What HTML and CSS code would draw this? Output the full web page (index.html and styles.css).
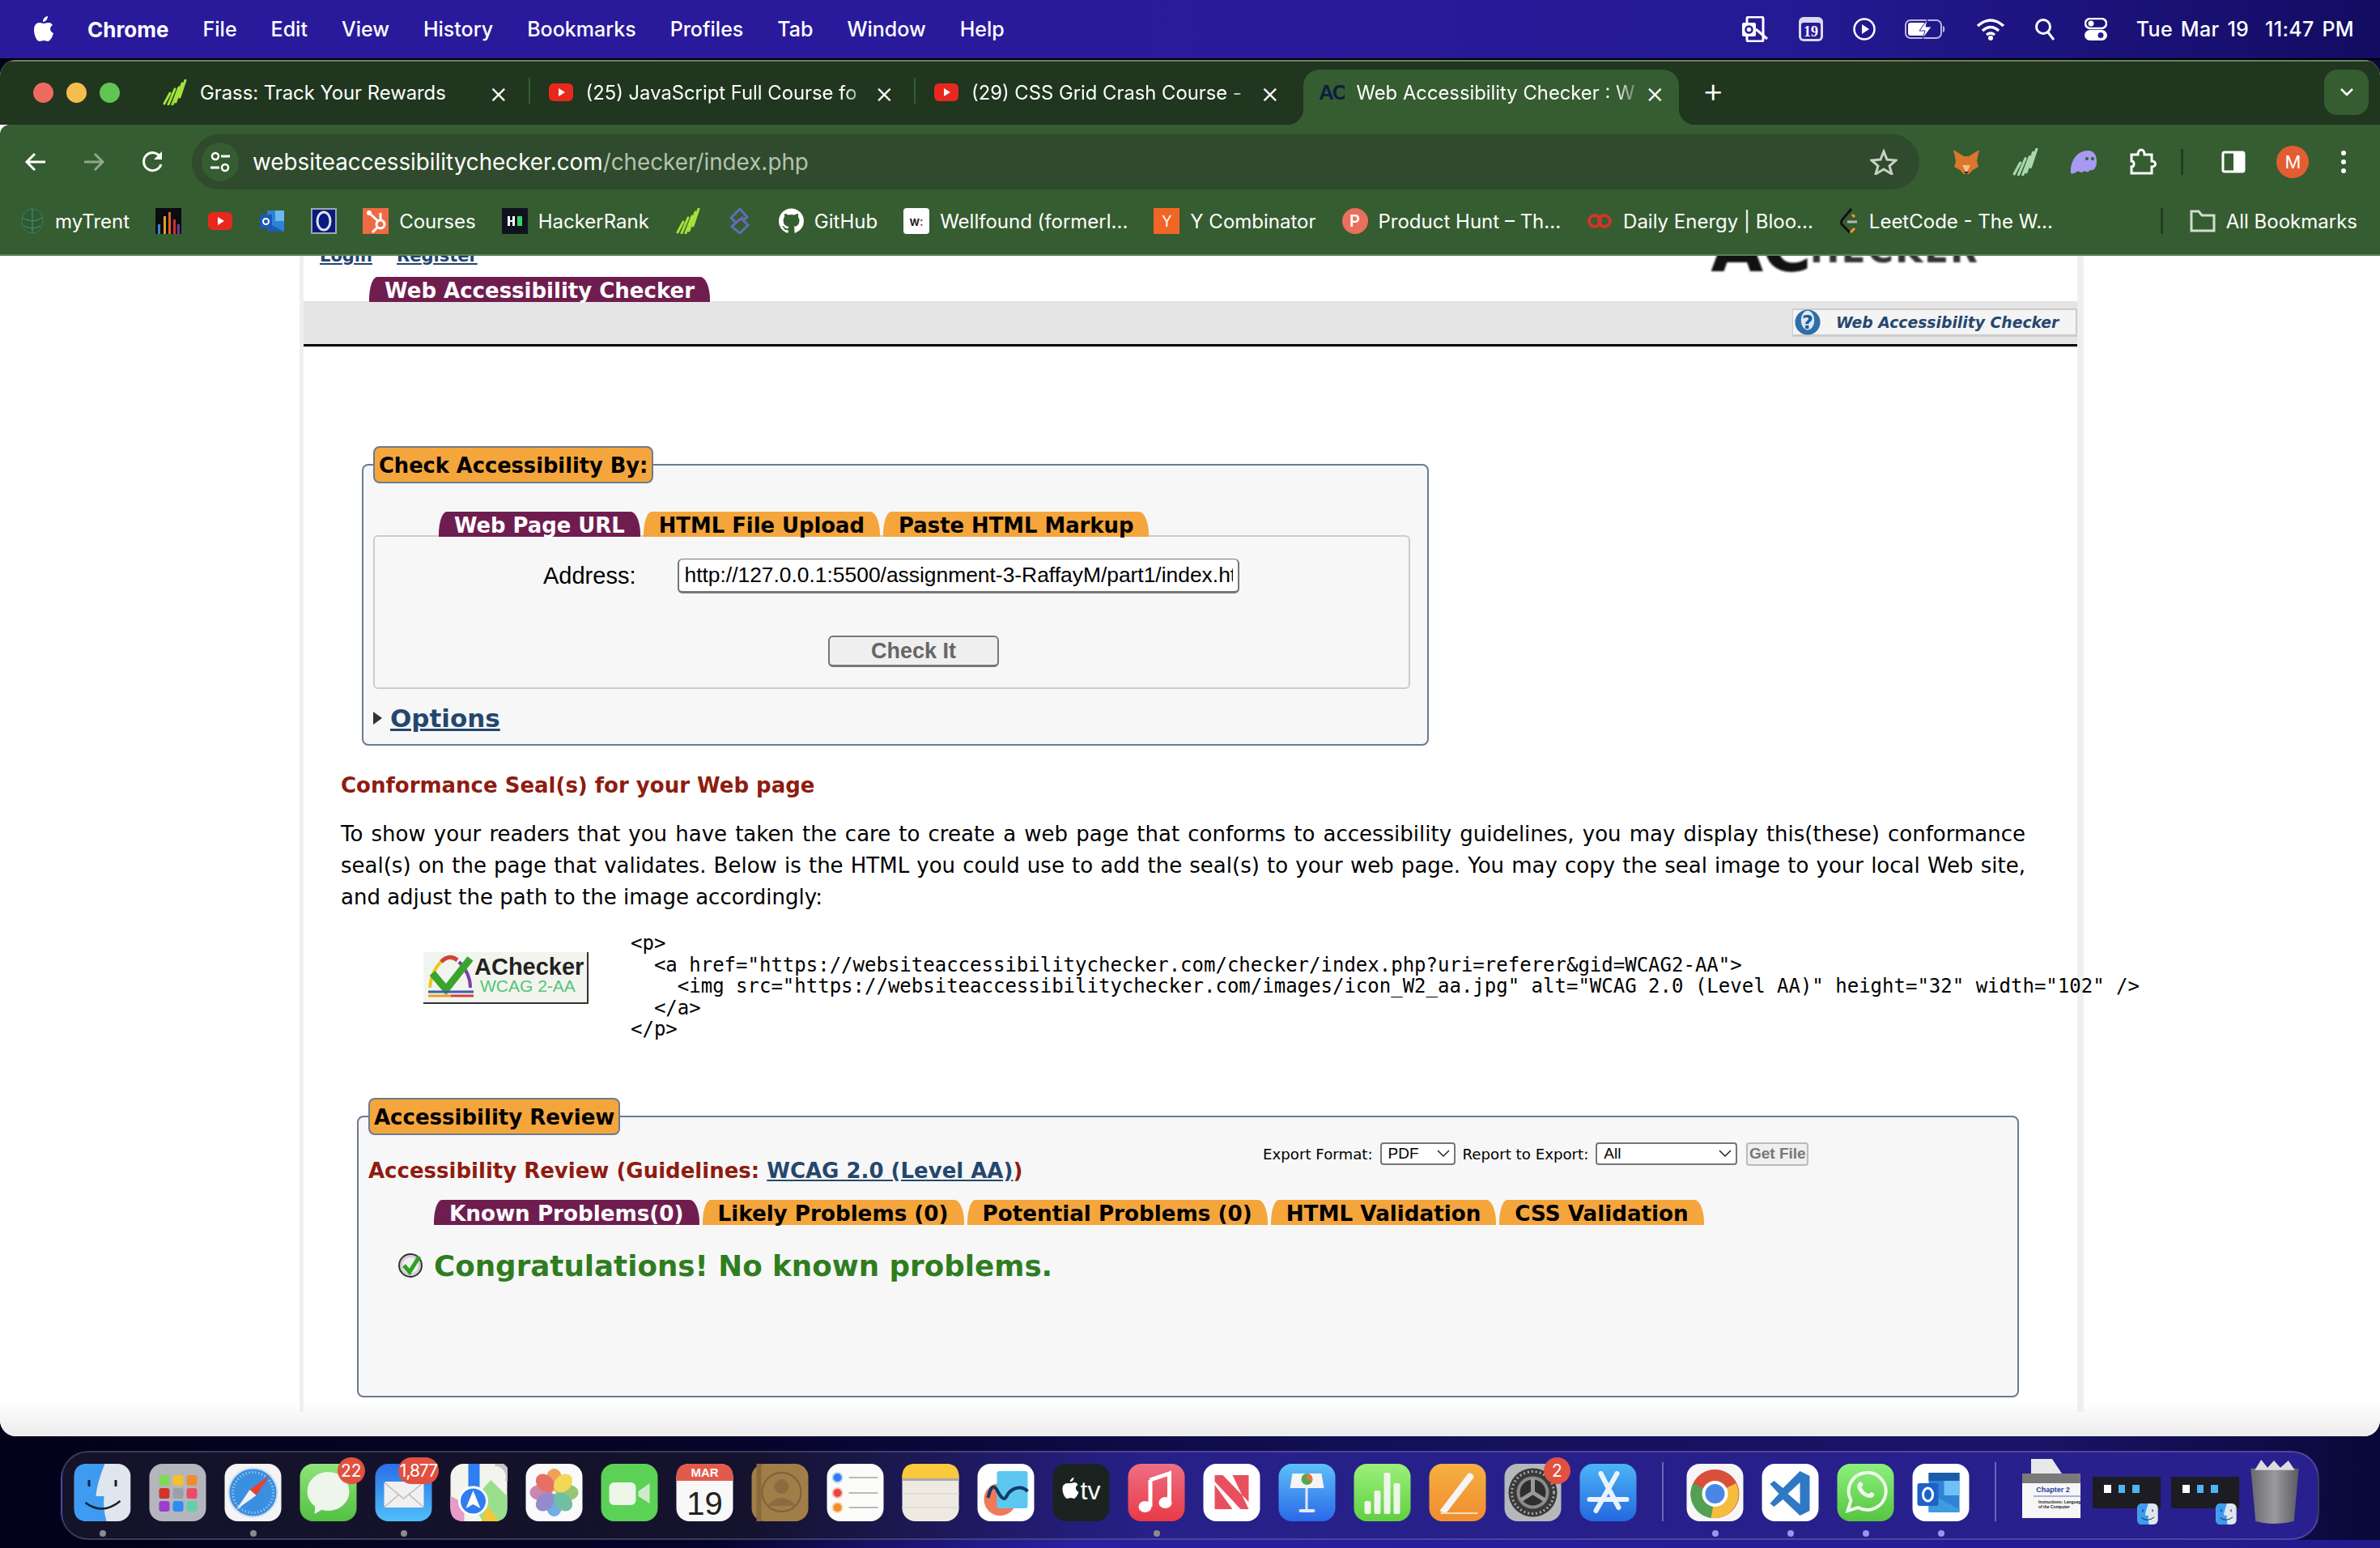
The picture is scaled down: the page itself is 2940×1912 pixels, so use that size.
FILE: index.html
```html
<!DOCTYPE html>
<html>
<head>
    <title>Web Accessibility Checker</title>
    <link rel="stylesheet" href="styles.css">
</head>
<body>
    <svg class="defs" width="0" height="0">
        <defs>
            <symbol id="yt" viewBox="0 0 32 32"><rect x="1" y="5" width="30" height="22" rx="6" fill="#e8281e"/><path d="M13 11l8 5-8 5z" fill="#fff"/></symbol>
            <symbol id="grass" viewBox="0 0 32 32"><path d="M3 30L10 17M8 31L16 12M13 31L21 10M17 28L25 5M22 22L29 1" stroke="#a4e23a" stroke-width="3" fill="none" stroke-linecap="round"/></symbol>
            <symbol id="finder" viewBox="0 0 70 71"><rect width="70" height="71" rx="16" fill="#dfe6ee"/><path d="M16 0H38C30 20 28 30 27 40H37C36 50 37 60 40 71H16Q0 71 0 55V16Q0 0 16 0Z" fill="#3d9bf2"/><rect x="17" y="20" width="3" height="8" fill="#123"/><rect x="50" y="20" width="3" height="8" fill="#123"/><path d="M14 48Q35 64 57 46" stroke="#123" stroke-width="2.5" fill="none"/></symbol>
        </defs>
    </svg>

    <div class="menubar">
        <svg class="apple" viewBox="0 0 24 32"><path d="M17 0c0 4-3 7-6 7 0-4 3-7 6-7zM12 9c2 0 3-1 6-1 2 0 4 1 5 3-4 2-4 8 1 10-1 4-4 10-7 10-2 0-3-1-5-1s-3 1-5 1C3 31 0 23 0 17 0 11 3 8 7 8c2 0 3 1 5 1z" fill="#fff"/></svg>
        <b>Chrome</b><span>File</span><span>Edit</span><span>View</span><span>History</span><span>Bookmarks</span><span>Profiles</span><span>Tab</span><span>Window</span><span>Help</span>
        <div class="status">
            <svg width="34" height="32" viewBox="0 0 34 32"><rect x="7" y="1" width="20" height="30" rx="2" fill="none" stroke="#fff" stroke-width="3"/><rect x="1" y="8" width="17" height="17" rx="2" fill="#fff"/><circle cx="9.500" cy="16.500" r="4" fill="none" stroke="#2a1a96" stroke-width="2.500"/><path d="M18 16l14 12" stroke="#fff" stroke-width="3"/></svg>
            <svg width="32" height="32" viewBox="0 0 32 32"><rect x="1" y="1" width="30" height="30" rx="6" fill="#d9d8ee"/><rect x="4" y="8" width="24" height="20" rx="3" fill="#2a1a96"/><text x="16" y="25" class="cal-num">19</text></svg>
            <svg width="28" height="30" viewBox="0 0 28 30"><circle cx="14" cy="15" r="12.500" fill="none" stroke="#fff" stroke-width="2.500"/><path d="M11 9l9 6-9 6z" fill="#fff"/></svg>
            <svg width="52" height="26" viewBox="0 0 52 26"><rect x="1" y="2" width="44" height="22" rx="6" fill="none" stroke="#b8b6e2" stroke-width="2"/><rect x="4" y="5" width="22" height="16" rx="3" fill="#fff"/><path d="M47 9c3 0 3 8 0 8" fill="#b8b6e2"/><path d="M28 1L18 15h7l-3 10 11-15h-7z" fill="#fff" stroke="#2a1a96"/></svg>
            <svg width="36" height="28" viewBox="0 0 36 28"><path d="M2 10Q18-4 34 10M8 16Q18 7 28 16M13 21Q18 17 23 21" fill="none" stroke="#fff" stroke-width="3.500"/><circle cx="18" cy="25" r="3" fill="#fff"/></svg>
            <svg width="26" height="28" viewBox="0 0 26 28"><circle cx="11" cy="11" r="8.500" fill="none" stroke="#fff" stroke-width="3"/><path d="M17 18l7 9" stroke="#fff" stroke-width="3"/></svg>
            <svg width="28" height="28" viewBox="0 0 28 28"><rect x="1" y="1" width="26" height="12" rx="6" fill="none" stroke="#fff" stroke-width="2.500"/><circle cx="8" cy="7" r="3.500" fill="#fff"/><rect x="0" y="15" width="28" height="13" rx="6.500" fill="#fff"/><circle cx="20" cy="21.500" r="3.500" fill="#2a1a96"/></svg>
            <span class="clock">Tue Mar 19&nbsp; 11:47 PM</span>
        </div>
    </div>

    <div class="window">
        <div class="tabstrip">
            <div class="lights"><i class="red"></i><i class="amber"></i><i class="green"></i></div>
            <div class="tab">
                <svg class="favicon"><use href="#grass"/></svg>
                <span class="tab-title">Grass: Track Your Rewards</span>
                <span class="tab-x">×</span>
            </div>
            <div class="tab line">
                <svg class="favicon"><use href="#yt"/></svg>
                <span class="tab-title fade">(25) JavaScript Full Course fo</span>
                <span class="tab-x">×</span>
            </div>
            <div class="tab line">
                <svg class="favicon"><use href="#yt"/></svg>
                <span class="tab-title fade">(29) CSS Grid Crash Course -</span>
                <span class="tab-x">×</span>
            </div>
            <div class="tab active">
                <svg class="favicon" viewBox="0 0 32 32"><text x="0" y="25" class="ac-icon">AC</text></svg>
                <span class="tab-title fade">Web Accessibility Checker : W</span>
                <span class="tab-x">×</span>
            </div>
            <span class="newtab">+</span>
            <span class="tab-menu"><svg width="18" height="12" viewBox="0 0 18 12"><path d="M2 2l7 7 7-7" fill="none" stroke="#fff" stroke-width="2.500"/></svg></span>
        </div>

        <div class="toolbar">
            <svg class="nav" width="28" height="28" viewBox="0 0 28 28"><path d="M26 14H4M13 4L3 14l10 10" fill="none" stroke="#fff" stroke-width="3"/></svg>
            <svg class="nav" width="28" height="28" viewBox="0 0 28 28"><path d="M2 14h22M15 4l10 10-10 10" fill="none" stroke="#8fa78c" stroke-width="3"/></svg>
            <svg class="nav" width="28" height="30" viewBox="0 0 28 30"><path d="M24 9A11 11 0 1 0 25 18" fill="none" stroke="#fff" stroke-width="3"/><path d="M26 2v10H16z" fill="#fff"/></svg>
            <div class="urlbar">
                <span class="site"><svg width="26" height="28" viewBox="0 0 26 28"><circle cx="7" cy="7" r="4" fill="none" stroke="#fff" stroke-width="2.500"/><path d="M14 7h11M1 21h11" stroke="#fff" stroke-width="3"/><circle cx="19" cy="21" r="4" fill="none" stroke="#fff" stroke-width="2.500"/></svg></span>
                <span class="url">websiteaccessibilitychecker.com<em>/checker/index.php</em></span>
                <svg class="star" width="34" height="32" viewBox="0 0 34 32"><path d="M17 3l4 10 11 1-8 7 3 10-10-6-10 6 3-10-8-7 11-1z" fill="none" stroke="#c7d0c5" stroke-width="3"/></svg>
            </div>
            <div class="tools">
                <svg width="34" height="32" viewBox="0 0 34 32"><path d="M1 1l13 8h6l13-8-3 14 2 7-7 4-5 5h-6l-5-5-7-4 2-7z" fill="#d9772c"/><path d="M12 20l5 10 5-10z" fill="#f3c08c"/><path d="M14 28h6l-3 3z" fill="#222"/></svg>
                <svg width="34" height="34" viewBox="0 0 32 32"><path d="M3 30L10 17M8 31L16 12M13 31L21 10M17 28L25 5M22 22L29 1" stroke="#a9d8ae" stroke-width="3" fill="none" stroke-linecap="round"/></svg>
                <svg width="34" height="30" viewBox="0 0 34 30"><path d="M1 29C0 12 10 1 22 1c8 0 11 6 11 13 0 9-4 12-8 11-2 3-5 3-7 1-3 3-6 2-8 0-3 3-7 4-9 3z" fill="#a79af0"/><circle cx="21" cy="11" r="2" fill="#365c31"/><circle cx="28" cy="11" r="2" fill="#365c31"/></svg>
                <svg width="34" height="34" viewBox="0 0 34 34"><path d="M3 8h8c0-8 8-8 8 0h9v8c6 0 6 7 0 7v8H3v-8c4 0 4-7 0-7z" fill="none" stroke="#fff" stroke-width="3"/></svg>
                <i class="tool-sep"></i>
                <svg width="30" height="28" viewBox="0 0 30 28"><rect x="2" y="2" width="26" height="24" rx="2" fill="none" stroke="#fff" stroke-width="3"/><rect x="15" y="2" width="13" height="24" fill="#fff"/></svg>
                <span class="avatar">M</span>
                <svg width="8" height="30" viewBox="0 0 8 30"><circle cx="4" cy="4" r="3" fill="#fff"/><circle cx="4" cy="15" r="3" fill="#fff"/><circle cx="4" cy="26" r="3" fill="#fff"/></svg>
            </div>
        </div>

        <div class="bookmarks">
            <a class="bm"><svg width="30" height="32" viewBox="0 0 30 32"><ellipse cx="15" cy="16" rx="13" ry="15" fill="#2c5a38" stroke="#447a52"/><path d="M15 1v30M3 12q12 8 24 0M5 22q10 6 20 0" stroke="#5a8d66" fill="none"/></svg>myTrent</a>
            <a class="bm"><svg width="32" height="32" viewBox="0 0 32 32"><rect width="32" height="32" fill="#0b0b10"/><rect x="3" y="20" width="3" height="12" fill="#3b82d0"/><rect x="10" y="10" width="3" height="22" fill="#e0a020"/><rect x="16" y="5" width="3" height="27" fill="#e06030"/><rect x="22" y="14" width="3" height="18" fill="#d03030"/><rect x="27" y="20" width="3" height="12" fill="#8030a0"/></svg></a>
            <a class="bm"><svg width="32" height="32"><use href="#yt"/></svg></a>
            <a class="bm"><svg width="32" height="32" viewBox="0 0 32 32"><rect x="10" y="3" width="21" height="26" fill="#2f83d6"/><rect x="20" y="3" width="11" height="13" fill="#6bb9f0"/><path d="M10 18l21 11H10z" fill="#1b5fb0"/><rect x="1" y="8" width="15" height="17" fill="#1a5bb5"/><circle cx="8.500" cy="16.500" r="3.500" fill="none" stroke="#fff" stroke-width="2"/></svg></a>
            <a class="bm"><svg width="32" height="32" viewBox="0 0 32 32"><rect width="32" height="32" fill="#9aa"/><rect x="2" y="2" width="28" height="28" fill="#0a1a80"/><ellipse cx="16" cy="16" rx="8" ry="11" fill="none" stroke="#dfe3ee" stroke-width="3"/></svg></a>
            <a class="bm"><svg width="32" height="32" viewBox="0 0 32 32"><rect width="32" height="32" fill="#ee6a45"/><circle cx="22" cy="20" r="5" fill="none" stroke="#fff" stroke-width="3"/><circle cx="8" cy="6" r="3" fill="#fff"/><path d="M8 6l12 11M22 15V6M18 24l-6 6" stroke="#fff" stroke-width="3"/></svg>Courses</a>
            <a class="bm"><svg width="32" height="32" viewBox="0 0 32 32"><rect width="32" height="32" fill="#0e141e"/><rect x="7" y="10" width="3" height="12" fill="#fff"/><rect x="13" y="10" width="3" height="12" fill="#fff"/><rect x="8" y="15" width="7" height="2" fill="#fff"/><rect x="19" y="10" width="6" height="12" fill="#39d265"/></svg>HackerRank</a>
            <a class="bm"><svg width="32" height="32"><use href="#grass"/></svg></a>
            <a class="bm"><svg width="32" height="32" viewBox="0 0 32 32"><path d="M16 1L5 12l6 6-5 5 10 8 10-10-6-6 5-4z" fill="none" stroke="#5d6fb5" stroke-width="3"/><path d="M11 18l9-7" stroke="#7a5fb5" stroke-width="3"/></svg></a>
            <a class="bm"><svg width="31" height="32" viewBox="0 0 16 16"><path d="M8 0C3.58 0 0 3.58 0 8c0 3.54 2.29 6.53 5.47 7.59.4.07.55-.17.55-.38 0-.19-.01-.82-.01-1.49-2.01.37-2.53-.49-2.69-.94-.09-.23-.48-.94-.82-1.13-.28-.15-.68-.52-.01-.53.63-.01 1.08.58 1.23.82.72 1.21 1.87.87 2.33.66.07-.52.28-.87.51-1.07-1.78-.2-3.64-.89-3.64-3.95 0-.87.31-1.59.82-2.15-.08-.2-.36-1.02.08-2.12 0 0 .67-.21 2.2.82.64-.18 1.32-.27 2-.27.68 0 1.36.09 2 .27 1.53-1.04 2.2-.82 2.2-.82.44 1.1.16 1.92.08 2.12.51.56.82 1.27.82 2.15 0 3.07-1.87 3.75-3.65 3.95.29.25.54.73.54 1.48 0 1.07-.01 1.93-.01 2.2 0 .21.15.46.55.38A8.013 8.013 0 0016 8c0-4.42-3.58-8-8-8z" fill="#fff"/></svg>GitHub</a>
            <a class="bm"><span class="ico-w">w<u>:</u></span>Wellfound (formerl...</a>
            <a class="bm"><span class="ico-y">Y</span>Y Combinator</a>
            <a class="bm"><span class="ico-p">P</span>Product Hunt – Th...</a>
            <a class="bm"><svg width="32" height="32" viewBox="0 0 32 32"><circle cx="10" cy="16" r="7" fill="none" stroke="#d0352a" stroke-width="4"/><circle cx="22" cy="16" r="7" fill="none" stroke="#d0352a" stroke-width="4"/></svg>Daily Energy | Bloo...</a>
            <a class="bm"><svg width="24" height="32" viewBox="0 0 22 32"><path d="M14 1L3 14c-2 2-2 5 0 7l9 9" fill="none" stroke="#111" stroke-width="3"/><path d="M15 8l3 3M18 25l-5 5" stroke="#f0a020" stroke-width="3"/><path d="M9 17h12" stroke="#b8b8b8" stroke-width="3"/></svg>LeetCode - The W...</a>
            <div class="bm-end">
                <i class="tool-sep"></i>
                <a class="bm"><svg width="32" height="28" viewBox="0 0 32 28"><path d="M2 26V2h9l4 5h15v19z" fill="none" stroke="#d3dbd2" stroke-width="3"/></svg>All Bookmarks</a>
            </div>
        </div>

        <div class="page">
            <div class="col">
                <div class="site-top">
                    <div class="login"><a href="#">Login</a><a href="#">Register</a></div>
                    <div class="logo"><b>AC</b><span>HECKER</span></div>
                </div>
                <div class="site-tabs"><span class="ptab on">Web Accessibility Checker</span></div>
                <div class="band">
                    <div class="band-link">
                        <svg width="36" height="32" viewBox="0 0 36 35"><circle cx="18" cy="17.500" r="17" fill="#2f6ea8"/><ellipse cx="18" cy="15" rx="9" ry="13" fill="#dbe9f5"/><text x="18" y="26" class="help-q">?</text></svg>
                        <span>Web Accessibility Checker</span>
                    </div>
                </div>

                <fieldset class="box box-check">
                    <legend>Check Accessibility By:</legend>
                    <div class="ptabs">
                        <span class="ptab on">Web Page URL</span>
                        <span class="ptab">HTML File Upload</span>
                        <span class="ptab">Paste HTML Markup</span>
                    </div>
                    <div class="inner">
                        <div class="addr">
                            <label>Address:</label>
                            <input type="text" value="http://127.0.0.1:5500/assignment-3-RaffayM/part1/index.html">
                        </div>
                        <button class="check">Check It</button>
                    </div>
                    <div class="options"><i></i><a href="#">Options</a></div>
                </fieldset>

                <h3 class="seal-head">Conformance Seal(s) for your Web page</h3>
                <p class="seal-text">To show your readers that you have taken the care to create a web page that conforms to accessibility guidelines, you may display this(these) conformance seal(s) on the page that validates. Below is the HTML you could use to add the seal(s) to your web page. You may copy the seal image to your local Web site, and adjust the path to the image accordingly:</p>
                <div class="seal-row">
                    <svg class="seal" width="204" height="64" viewBox="0 0 204 64">
                        <rect width="204" height="64" fill="#f2f4ee"/>
                        <path d="M202 0h2v64H0v-2h202z" fill="#333"/>
                        <path d="M8 44Q10 22 24 10" fill="none" stroke="#e8c820" stroke-width="4"/>
                        <path d="M22 12Q32 2 42 10" fill="none" stroke="#d0443a" stroke-width="5"/>
                        <path d="M44 12Q58 26 58 44" fill="none" stroke="#7a3fb0" stroke-width="4"/>
                        <path d="M11 26L28 46L58 8" fill="none" stroke="#3aa52c" stroke-width="9"/>
                        <path d="M6 49H62" stroke="#3a5fb0" stroke-width="3"/>
                        <path d="M6 54H34" stroke="#e8a020" stroke-width="3"/>
                        <path d="M34 54H62" stroke="#d0443a" stroke-width="3"/>
                        <text x="63" y="28" class="seal-a">AChecker</text>
                        <text x="70" y="49" class="seal-b">WCAG 2-AA</text>
                    </svg>
                    <pre class="code">&lt;p&gt;
  &lt;a href="https://websiteaccessibilitychecker.com/checker/index.php?uri=referer&amp;gid=WCAG2-AA"&gt;
    &lt;img src="https://websiteaccessibilitychecker.com/images/icon_W2_aa.jpg" alt="WCAG 2.0 (Level AA)" height="32" width="102" /&gt;
  &lt;/a&gt;
&lt;/p&gt;</pre>
                </div>

                <fieldset class="box box-review">
                    <legend>Accessibility Review</legend>
                    <div class="review-top">
                        <h3 class="review-head">Accessibility Review (Guidelines: <a href="#">WCAG 2.0 (Level AA)</a>)</h3>
                        <div class="export">
                            <span>Export Format:</span>
                            <div class="sel sel-fmt">PDF<svg width="16" height="10" viewBox="0 0 16 10"><path d="M1 1l7 7 7-7" fill="none" stroke="#222" stroke-width="1.500"/></svg></div>
                            <span>Report to Export:</span>
                            <div class="sel sel-rep">All<svg width="16" height="10" viewBox="0 0 16 10"><path d="M1 1l7 7 7-7" fill="none" stroke="#222" stroke-width="1.500"/></svg></div>
                            <button class="getfile">Get File</button>
                        </div>
                    </div>
                    <div class="ptabs">
                        <span class="ptab on">Known Problems(0)</span>
                        <span class="ptab">Likely Problems (0)</span>
                        <span class="ptab">Potential Problems (0)</span>
                        <span class="ptab">HTML Validation</span>
                        <span class="ptab">CSS Validation</span>
                    </div>
                    <div class="congrats">
                        <svg width="33" height="30" viewBox="0 0 33 30"><circle cx="16" cy="15" r="14" fill="#cfcfcf" stroke="#333" stroke-width="2"/><circle cx="16" cy="15" r="10" fill="#efefef"/><path d="M8 15l7 8L27 4" fill="none" stroke="#2fa020" stroke-width="5"/></svg>
                        <span>Congratulations! No known problems.</span>
                    </div>
                </fieldset>
            </div>
        </div>
    </div>

    <div class="dock">
        <div class="app dotted"><svg class="ic" viewBox="0 0 70 71"><use href="#finder"/></svg></div>
        <div class="app"><svg class="ic" viewBox="0 0 70 71"><rect width="70" height="71" rx="16" fill="#b5b5bd"/><g><rect x="12" y="14" width="13" height="13" rx="3" fill="#7ed957"/><rect x="29" y="14" width="13" height="13" rx="3" fill="#f6c02c"/><rect x="46" y="14" width="13" height="13" rx="3" fill="#ef8c2c"/><rect x="12" y="30" width="13" height="13" rx="3" fill="#d0342c"/><rect x="29" y="30" width="13" height="13" rx="3" fill="#9aa0a6"/><rect x="46" y="30" width="13" height="13" rx="3" fill="#ea4c68"/><rect x="12" y="46" width="13" height="13" rx="3" fill="#9a3fd0"/><rect x="29" y="46" width="13" height="13" rx="3" fill="#2f8cf5"/><rect x="46" y="46" width="13" height="13" rx="3" fill="#5fd0a8"/></g></svg></div>
        <div class="app dotted"><svg class="ic" viewBox="0 0 70 71"><rect width="70" height="71" rx="16" fill="#f4f4f4"/><circle cx="35" cy="35.500" r="30" fill="#3a8fe0" stroke="#cfe0f0" stroke-width="2"/><circle cx="35" cy="35.500" r="25" fill="none" stroke="#bcd8f4" stroke-width="3" stroke-dasharray="1 3"/><path d="M56 14L31 32l8 7z" fill="#e8402c"/><path d="M14 57L31 32l8 7z" fill="#f2f2f2"/></svg></div>
        <div class="app"><svg class="ic" viewBox="0 0 70 71"><defs><linearGradient id="gr" x1="0" y1="0" x2="0" y2="1"><stop offset="0" stop-color="#8fe47a"/><stop offset="1" stop-color="#52c042"/></linearGradient></defs><rect width="70" height="71" rx="16" fill="url(#gr)"/><ellipse cx="35" cy="34" rx="26" ry="24" fill="#eef5ea"/><path d="M19 50l-1 12 12-7z" fill="#eef5ea"/></svg><em class="badge b22">22</em></div>
        <div class="app dotted"><svg class="ic" viewBox="0 0 70 71"><defs><linearGradient id="ml" x1="0" y1="0" x2="0" y2="1"><stop offset="0" stop-color="#2a6fe8"/><stop offset="1" stop-color="#4fc0f8"/></linearGradient></defs><rect width="70" height="71" rx="16" fill="url(#ml)"/><rect x="11" y="22" width="49" height="32" rx="3" fill="#f0f0f0"/><path d="M11 23l24 20 25-20M11 54l18-16M60 54L42 38" fill="none" stroke="#bbb" stroke-width="1.500"/></svg><em class="badge b1877">1,877</em></div>
        <div class="app"><svg class="ic" viewBox="0 0 70 71"><rect width="70" height="71" rx="16" fill="#f4f4ee"/><path d="M0 40L22 50 50 20 70 40V55Q70 71 54 71H40L30 55H0z" fill="#9adf8e"/><path d="M0 40L17 50V71H16Q0 71 0 55z" fill="#e89ac8"/><path d="M38 71L46 52 60 71z" fill="#f5c63a"/><rect x="22" y="0" width="14" height="30" fill="#2f7df0"/><path d="M55 0a16 16 0 0 1 15 22" fill="none" stroke="#c5c5c5" stroke-width="6"/><circle cx="28" cy="46" r="17" fill="#2f7df0" stroke="#fff" stroke-width="3"/><path d="M28 33l9 22-9-5-9 5z" fill="#fff"/></svg></div>
        <div class="app"><svg class="ic" viewBox="0 0 70 71"><rect width="70" height="71" rx="16" fill="#fafafa"/><g opacity=".8"><ellipse cx="35" cy="20" rx="10" ry="14" fill="#f08a30"/><ellipse cx="35" cy="51" rx="10" ry="14" fill="#4f9be0"/><ellipse cx="19" cy="35.500" rx="14" ry="10" fill="#c06aa0"/><ellipse cx="51" cy="35.500" rx="14" ry="10" fill="#80b850"/><ellipse cx="24" cy="24" rx="10" ry="13" fill="#e05040" transform="rotate(-45 24 24)"/><ellipse cx="46" cy="24" rx="10" ry="13" fill="#f0d030" transform="rotate(45 46 24)"/><ellipse cx="24" cy="47" rx="10" ry="13" fill="#7a70c0" transform="rotate(45 24 47)"/><ellipse cx="46" cy="47" rx="10" ry="13" fill="#50b090" transform="rotate(-45 46 47)"/></g></svg></div>
        <div class="app"><svg class="ic" viewBox="0 0 70 71"><rect width="70" height="71" rx="16" fill="#5bd255"/><rect x="10" y="23" width="33" height="28" rx="6" fill="#eef6ea"/><path d="M46 34l14-10v25L46 40z" fill="#cfeac8"/></svg></div>
        <div class="app"><svg class="ic" viewBox="0 0 70 71"><rect width="70" height="71" rx="16" fill="#f8f8f8"/><path d="M0 16Q0 0 16 0H54Q70 0 70 16V21H0z" fill="#e25a4c"/><text x="35" y="16" class="cal-mon">MAR</text><text x="35" y="63" class="cal-day">19</text></svg></div>
        <div class="app"><svg class="ic" viewBox="0 0 70 71"><rect width="70" height="71" rx="16" fill="#a17e48"/><rect x="6" width="6" height="71" fill="#8a6a3a"/><circle cx="37" cy="35" r="24" fill="none" stroke="#7d6238" stroke-width="2"/><circle cx="37" cy="28" r="9" fill="#8a6c40"/><path d="M19 52q18-20 36 0" fill="#8a6c40"/></svg></div>
        <div class="app"><svg class="ic" viewBox="0 0 70 71"><rect width="70" height="71" rx="16" fill="#fbfbf9"/><circle cx="13" cy="17" r="6" fill="#2f7df0" stroke="#bcd3f5" stroke-width="2"/><circle cx="13" cy="36" r="6" fill="#e8473c" stroke="#f5c3bd" stroke-width="2"/><circle cx="13" cy="54" r="6" fill="#ef8c2c" stroke="#f8d5a8" stroke-width="2"/><path d="M27 17h36M27 36h36M27 54h36" stroke="#bbb" stroke-width="2"/></svg></div>
        <div class="app"><svg class="ic" viewBox="0 0 70 71"><rect width="70" height="71" rx="16" fill="#eeeae2"/><path d="M0 18V16Q0 0 16 0H54Q70 0 70 16V18z" fill="#fbc93c"/><rect y="18" width="70" height="3" fill="#aaa"/><path d="M0 37h70M0 54h70" stroke="#ddd" stroke-width="2"/></svg></div>
        <div class="app"><svg class="ic" viewBox="0 0 70 71"><rect width="70" height="71" rx="16" fill="#fff"/><circle cx="28" cy="44" r="20" fill="#ee7a5a"/><rect x="24" y="9" width="38" height="46" rx="3" fill="#5cc8f0"/><path d="M13 42Q18 20 25 34T36 40T48 30T62 34" fill="none" stroke="#123a6a" stroke-width="4"/></svg></div>
        <div class="app"><svg class="ic" viewBox="0 0 70 71"><rect width="70" height="71" rx="16" fill="#1b2320"/><path d="M21 22c1-3 3-5 5-5 0 3-2 5-5 5zM22 24c2 0 3-1 5-1s3 1 4 3c-4 2-3 7 1 9-1 3-4 8-6 8-1 0-2-1-4-1s-3 1-4 1c-3 0-6-7-6-12 0-5 3-7 6-7z" fill="#fff"/><text x="34" y="44" class="tv">tv</text></svg></div>
        <div class="app dotted"><svg class="ic" viewBox="0 0 70 71"><defs><linearGradient id="mu" x1="0" y1="0" x2="0" y2="1"><stop offset="0" stop-color="#ee6f84"/><stop offset="1" stop-color="#e83a44"/></linearGradient></defs><rect width="70" height="71" rx="16" fill="url(#mu)"/><path d="M27 20L51 12V48" fill="none" stroke="#fff" stroke-width="5"/><rect x="25" y="20" width="5" height="33" fill="#fff"/><ellipse cx="21" cy="53" rx="8" ry="7" fill="#fff"/><ellipse cx="46" cy="48" rx="8" ry="7" fill="#fff"/></svg></div>
        <div class="app"><svg class="ic" viewBox="0 0 70 71"><rect width="70" height="71" rx="16" fill="#fff"/><path d="M14 14H24L56 47V14H36L56 56H46L14 22z" fill="#e8505f"/><path d="M14 26L36 56H14z" fill="#e8505f"/></svg></div>
        <div class="app"><svg class="ic" viewBox="0 0 70 71"><defs><linearGradient id="ke" x1="0" y1="0" x2="0" y2="1"><stop offset="0" stop-color="#5cc0fa"/><stop offset="1" stop-color="#2a68e8"/></linearGradient></defs><rect width="70" height="71" rx="16" fill="url(#ke)"/><path d="M17 12H53L56 30H14z" fill="#f4f4f4"/><circle cx="35" cy="19" r="7" fill="#55a850"/><path d="M35 19V12a7 7 0 0 1 6 10z" fill="#e8743c"/><rect x="33" y="30" width="3" height="28" fill="#e8e8e8"/><rect x="25" y="56" width="20" height="4" rx="2" fill="#e8e8e8"/></svg></div>
        <div class="app"><svg class="ic" viewBox="0 0 70 71"><defs><linearGradient id="nu" x1="0" y1="0" x2="0" y2="1"><stop offset="0" stop-color="#9cf07a"/><stop offset="1" stop-color="#5fd042"/></linearGradient></defs><rect width="70" height="71" rx="16" fill="url(#nu)"/><g fill="#eef5ea"><rect x="13" y="46" width="8" height="16" rx="2"/><rect x="25" y="33" width="8" height="29" rx="2"/><rect x="37" y="11" width="8" height="51" rx="2"/><rect x="49" y="24" width="8" height="38" rx="2"/></g></svg></div>
        <div class="app"><svg class="ic" viewBox="0 0 70 71"><defs><linearGradient id="pg" x1="0" y1="0" x2="0" y2="1"><stop offset="0" stop-color="#f6b040"/><stop offset="1" stop-color="#f08c30"/></linearGradient></defs><rect width="70" height="71" rx="16" fill="url(#pg)"/><path d="M13 58L48 12a5 5 0 0 1 7 5L20 62z" fill="#f5f5f5"/><rect x="14" y="60" width="46" height="2" fill="#f6dcb8"/></svg></div>
        <div class="app"><svg class="ic" viewBox="0 0 70 71"><rect width="70" height="71" rx="16" fill="#b4b8ba"/><circle cx="35" cy="35.500" r="30" fill="#3a3a3a"/><circle cx="35" cy="35.500" r="26" fill="none" stroke="#a8a8a8" stroke-width="3" stroke-dasharray="2 3"/><circle cx="35" cy="35.500" r="20" fill="#8a8a8a"/><circle cx="35" cy="35.500" r="16" fill="#2e2e2e"/><path d="M35 35.500V18M35 35.500L20 45M35 35.500L50 45" stroke="#999" stroke-width="5"/></svg><em class="badge b2">2</em></div>
        <div class="app"><svg class="ic" viewBox="0 0 70 71"><defs><linearGradient id="as" x1="0" y1="0" x2="0" y2="1"><stop offset="0" stop-color="#4cb4f5"/><stop offset="1" stop-color="#2468e0"/></linearGradient></defs><rect width="70" height="71" rx="16" fill="url(#as)"/><path d="M26 12l22 42M46 12L20 58M12 44h46" stroke="#eaf3fb" stroke-width="6" stroke-linecap="round"/></svg></div>
        <i class="dock-sep"></i>
        <div class="app dotted lit"><svg class="ic" viewBox="0 0 70 71"><rect width="70" height="71" rx="16" fill="#f6f6f6"/><circle cx="35" cy="37" r="30" fill="#d8503c"/><path d="M35 37L61 24A30 30 0 0 1 30 67z" fill="#f4bd3e"/><path d="M35 37L30 67A30 30 0 0 1 8 24z" fill="#52a052"/><circle cx="35" cy="37" r="14" fill="#4a86e8" stroke="#fff" stroke-width="4"/></svg></div>
        <div class="app dotted lit"><svg class="ic" viewBox="0 0 70 71"><rect width="70" height="71" rx="16" fill="#fff"/><path d="M47 9L59 15V58L47 64 26 44 15 53 10 49 21 37 10 25 15 21 26 30z" fill="#2f78c4"/><path d="M47 23L32 37 47 50z" fill="#fff"/></svg></div>
        <div class="app dotted lit"><svg class="ic" viewBox="0 0 70 71"><defs><linearGradient id="wa" x1="0" y1="0" x2="0" y2="1"><stop offset="0" stop-color="#8cf07c"/><stop offset="1" stop-color="#56c442"/></linearGradient></defs><rect width="70" height="71" rx="16" fill="url(#wa)"/><path d="M13 58l4-13a23 23 0 1 1 9 9z" fill="none" stroke="#eef8ea" stroke-width="4"/><path d="M26 24c2-3 5-2 6 2l-2 3c2 4 5 7 9 8l3-2c4 1 5 4 2 6-8 5-24-10-18-17z" fill="#eef8ea"/></svg></div>
        <div class="app dotted lit"><svg class="ic" viewBox="0 0 70 71"><rect width="70" height="71" rx="16" fill="#fff"/><rect x="20" y="11" width="38" height="48" fill="#2f83d6"/><rect x="20" y="11" width="38" height="10" fill="#1c5ba8"/><rect x="39" y="21" width="19" height="18" fill="#6fc0f5"/><path d="M20 36l38 20v4H20z" fill="#3f9be0"/><rect x="6" y="24" width="26" height="28" rx="3" fill="#1d62c4"/><ellipse cx="19" cy="38" rx="6" ry="8" fill="none" stroke="#fff" stroke-width="3"/></svg></div>
        <i class="dock-sep"></i>
        <div class="stack">
            <svg class="doc" width="72" height="73" viewBox="0 0 72 73"><path d="M11 0h26l12 18H11z" fill="#e8e8e8"/><rect y="18" width="72" height="55" fill="#f6f6f6"/><rect y="18" width="72" height="12" fill="#7a7a7a"/><text x="38" y="41" class="doc-t">Chapter 2</text><path d="M14 46h58" stroke="#5a6ab0"/><text x="20" y="55" class="doc-s">Instructions: Language</text><text x="20" y="61" class="doc-s">of the Computer</text></svg>
            <div class="folder"><i></i><svg width="26" height="26" viewBox="0 0 70 71"><use href="#finder"/></svg></div>
            <div class="folder"><i></i><svg width="26" height="26" viewBox="0 0 70 71"><use href="#finder"/></svg></div>
            <svg class="trash" width="62" height="81" viewBox="0 0 62 82"><defs><linearGradient id="tr" x1="0" y1="0" x2="1" y2="0"><stop offset="0" stop-color="#6a6a6e"/><stop offset=".5" stop-color="#9a9a9e"/><stop offset="1" stop-color="#5a5a60"/></linearGradient></defs><path d="M1 12h60l-6 66q-24 6-48 0z" fill="url(#tr)"/><path d="M6 14L14 1l8 10 8-9 8 9 10-9 8 12z" fill="#ddd"/></svg>
        </div>
    </div>
</body>
</html>
```

FILE: styles.css
```css
*{
    box-sizing: border-box;
}
html,body{
    margin: 0;
    padding: 0;
    height: 100%;
}
body{
    width: 2940px;
    height: 1912px;
    overflow: hidden;
    background:
        linear-gradient(90deg,transparent 30%,#2a20a0 45%,#231a8c 100%) left bottom/100% 10px no-repeat,
        linear-gradient(90deg,#03021a 0,#05042a 30%,#14105a 60%,#1a1468 85%,#0a0838 100%);
    font-family: "Inter","Liberation Sans",sans-serif;
}
.defs{
    display: block;
    height: 0;
}

/* menu bar */
.menubar{
    height: 74px;
    padding: 0 32px 2px 42px;
    display: flex;
    align-items: center;
    gap: 42px;
    color: #fff;
    font-size: 25px;
    font-weight: 500;
    background: linear-gradient(90deg,#281a9a 0,#2a1a9c 50%,#241a94 75%,#120c62 100%);
    box-shadow: inset 0 -2px 0 #000;
}
.menubar b{
    font-size: 26px;
}
.apple{
    width: 24px;
    height: 32px;
}
.status{
    margin-left: auto;
    display: flex;
    align-items: center;
    gap: 36px;
}
.clock{
    margin-left: 0;
    white-space: nowrap;
    word-spacing: 3px;
    letter-spacing: .3px;
}
.cal-num{
    fill: #fff;
    font: bold 18px "Liberation Serif",serif;
    text-anchor: middle;
}

/* browser */
.window{
    height: 1700px;
    border-radius: 20px;
    overflow: hidden;
    background: #fff;
}
.tabstrip{
    height: 80px;
    padding-top: 12px;
    display: flex;
    background: #20361f;
    box-shadow: inset 0 2px 0 #6c7f69;
}
.lights{
    width: 176px;
    height: 56px;
    padding-left: 41px;
    display: flex;
    align-items: center;
    gap: 16px;
}
.lights i{
    width: 25px;
    height: 25px;
    border-radius: 50%;
}
.lights .red{background: #ee6a5f;}
.lights .amber{background: #f5bd4f;}
.lights .green{background: #61c554;}
.tab{
    width: 476.500px;
    height: 56px;
    padding: 0 24px;
    display: flex;
    align-items: center;
    color: #fff;
    font-size: 23.800px;
    position: relative;
}
.tab.line::before{
    content: "";
    position: absolute;
    left: 0;
    top: 10px;
    width: 2px;
    height: 32px;
    background: #365c31;
}
.tab.active{
    height: 68px;
    width: 464px;
    margin-left: 4px;
    padding-left: 19px;
    padding-bottom: 12px;
    background: #365c31;
    border-radius: 20px 20px 0 0;
}
.tab.active::before,.tab.active::after{
    content: "";
    position: absolute;
    bottom: 0;
    width: 20px;
    height: 20px;
}
.tab.active::before{
    left: -20px;
    background: radial-gradient(circle at 0 0,transparent 20px,#365c31 20.500px);
}
.tab.active::after{
    right: -20px;
    background: radial-gradient(circle at 100% 0,transparent 20px,#365c31 20.500px);
}
.favicon{
    width: 32px;
    height: 32px;
    flex: none;
}
.ac-icon{
    font: bold 26px "Liberation Sans",sans-serif;
    fill: #0d1f3f;
    letter-spacing: -2px;
}
.tab-title{
    margin-left: 15px;
    width: 354px;
    flex: none;
    overflow: hidden;
    white-space: nowrap;
}
.tab-title.fade{
    -webkit-mask-image: linear-gradient(90deg,#000 90%,transparent 100%);
    mask-image: linear-gradient(90deg,#000 90%,transparent 100%);
}
.tab-x{
    margin-left: 3px;
    font-size: 36px;
    font-weight: 300;
    line-height: 30px;
}
.newtab{
    margin-left: 29px;
    height: 56px;
    color: #fff;
    font-size: 42px;
    font-weight: 300;
    line-height: 50px;
}
.tab-menu{
    margin: 0 14px 0 auto;
    width: 55px;
    height: 56px;
    border-radius: 16px;
    background: #365c31;
    display: flex;
    align-items: center;
    justify-content: center;
}

.toolbar{
    height: 80px;
    padding: 12px 41px 0 30px;
    display: flex;
    align-items: center;
    background: #365c31;
    border-radius: 12px 0 0 0;
}
.nav{
    margin-right: 44px;
    flex: none;
}
.nav + .urlbar{
    margin-left: -9px;
}
.urlbar{
    width: 2134px;
    height: 68px;
    padding: 0 13px 0 12px;
    display: flex;
    align-items: center;
    border-radius: 34px;
    background: #2f4a2c;
    color: #fff;
    font-size: 27.800px;
}
.site{
    width: 46px;
    height: 48px;
    border-radius: 24px;
    background: #365c31;
    display: flex;
    align-items: center;
    justify-content: center;
    flex: none;
}
.url{
    margin-left: 17px;
    white-space: nowrap;
}
.url em{
    font-style: normal;
    color: #b4c2b2;
}
.star{
    margin-left: auto;
    margin-right: 14px;
}
.tools{
    flex: 1;
    display: flex;
    align-items: center;
    justify-content: space-between;
    padding-left: 41px;
}
.tool-sep{
    width: 3px;
    height: 32px;
    background: #243e21;
}
.tools .tool-sep{
    margin: 0 8px 0 -8px;
}
.avatar{
    width: 40px;
    height: 40px;
    border-radius: 50%;
    background: #e35d33;
    color: #fff;
    font-size: 22px;
    display: flex;
    align-items: center;
    justify-content: center;
}

.bookmarks{
    height: 82px;
    padding: 0 28px 2px 25px;
    display: flex;
    align-items: center;
    gap: 32px;
    color: #fff;
    font-size: 24px;
    background: #365c31;
    border-bottom: 2px solid #5f7f5a;
}
.bm{
    display: flex;
    align-items: center;
    gap: 13px;
    white-space: nowrap;
}
.bm-end{
    margin-left: auto;
    display: flex;
    align-items: center;
    gap: 33px;
}
.ico-w,.ico-y,.ico-p{
    width: 32px;
    height: 32px;
    display: flex;
    align-items: center;
    justify-content: center;
    font-size: 18px;
    font-weight: 600;
    flex: none;
}
.ico-w{
    background: #fff;
    border-radius: 4px;
    color: #111;
    font-size: 15px;
}
.ico-w u{
    color: #d22;
    text-decoration: none;
}
.ico-y{
    background: #f26625;
    font-weight: 400;
}
.ico-p{
    background: #ea6f5c;
    border-radius: 50%;
    font-size: 20px;
}

/* page */
.page{
    height: 1458px;
    padding-left: 370px;
    overflow: hidden;
    background: linear-gradient(180deg,#fff 97%,#ececec 100%);
    color: #000;
    font-family: "DejaVu Sans",sans-serif;
}
.col{
    width: 2204px;
    height: 100%;
    border-left: 5px solid #efefef;
    border-right: 8px solid #efefef;
}
.site-top{
    height: 56px;
    margin-top: -30px;
    padding-left: 20px;
    padding-right: 121px;
    display: flex;
    justify-content: space-between;
    align-items: flex-end;
}
.login{
    display: flex;
    gap: 30px;
    margin-bottom: 14px;
    font-size: 21px;
    font-weight: bold;
}
.login a,.options a,.review-head a{
    color: #24476f;
}
.logo{
    display: flex;
    align-items: flex-end;
    margin-bottom: -6px;
    filter: blur(.8px);
    font-weight: bold;
    color: #111;
    line-height: 1;
}
.logo b{
    font-size: 84px;
    letter-spacing: -2px;
}
.logo span{
    margin-bottom: 17px;
    font-size: 44px;
    letter-spacing: 2px;
    color: #333;
}
.site-tabs{
    height: 30px;
    padding-left: 81px;
    display: flex;
}
.ptab{
    display: block;
    height: 31px;
    padding: 0 19px;
    border-radius: 10px 12px 0 0 / 28px 28px 0 0;
    background: #f4a63c;
    color: #000;
    font-size: 25.850px;
    font-weight: bold;
    line-height: 34px;
    white-space: nowrap;
}
.ptab.on{
    background: #6f1d4f;
    color: #fff;
}
.site-tabs .ptab{
    font-size: 26px;
}
.band{
    height: 56px;
    padding-top: 9px;
    display: flex;
    justify-content: flex-end;
    background: #e5e5e5;
    border-bottom: 3px solid #000;
}
.band-link{
    width: 352px;
    height: 35px;
    display: flex;
    align-items: center;
    gap: 17px;
    background: #f4f4f4;
    border: 2px solid #ccc;
    border-width: 2px 2px 3px 1px;
    color: #24476f;
    font-size: 18.800px;
    font-weight: bold;
    font-style: italic;
    white-space: nowrap;
}
.help-q{
    font: bold 26px "DejaVu Sans",sans-serif;
    fill: #1f5a94;
    text-anchor: middle;
}

.box{
    margin: 0;
    padding: 0 12px;
    min-width: 0;
    background: #f7f7f7;
    border: 2px solid #6c7b90;
    border-radius: 8px;
}
.box legend{
    padding: 0 5px;
    height: 46px;
    margin-left: 0;
    background: #f4a63c;
    border: 2px solid #6c7b90;
    border-radius: 8px;
    font-size: 25.700px;
    font-weight: bold;
    line-height: 44px;
    white-space: nowrap;
}
.box-check{
    width: 1318px;
    height: 370px;
    margin: 123px 0 0 72px;
}
.ptabs{
    padding-left: 81px;
    display: flex;
    gap: 4px;
    position: relative;
    z-index: 1;
}
.box-check .ptabs{
    margin-top: 35px;
}
.inner{
    width: 1281px;
    height: 190px;
    margin-top: -2px;
    background: #f7f7f7;
    border: 2px solid #ccc;
    border-radius: 6px;
    display: flex;
    flex-direction: column;
}
.addr{
    margin: 27px 0 0 208px;
    display: flex;
    align-items: center;
    gap: 52px;
    font-family: "Liberation Sans",sans-serif;
    font-size: 29px;
}
.addr input{
    width: 694px;
    height: 43px;
    padding: 0 6px;
    border: 2px solid #767676;
    border-width: 1px 2px 3px 2px;
    border-radius: 6px;
    background: #fff;
    color: #000;
    font-family: "Liberation Sans",sans-serif;
    font-size: 26.400px;
}
.check{
    width: 211px;
    height: 39px;
    margin: 52px 0 0 560px;
    padding: 0;
    background: #efefef;
    border: 2px solid #777;
    border-bottom-width: 3px;
    border-radius: 6px;
    color: #666;
    font-family: "Liberation Sans",sans-serif;
    font-size: 27px;
    font-weight: bold;
}
.options{
    margin-top: 18px;
    display: flex;
    align-items: center;
    gap: 10px;
    font-size: 31px;
    font-weight: bold;
}
.options i{
    width: 0;
    height: 0;
    border-left: 11px solid #333;
    border-top: 8px solid transparent;
    border-bottom: 8px solid transparent;
}
.seal-head{
    margin: 30px 0 0 46px;
    color: #8f1c10;
    font-size: 26px;
    line-height: 38px;
}
.seal-text{
    width: 2081px;
    margin: 22px 0 0 46px;
    font-size: 26px;
    line-height: 39px;
    text-align: justify;
}
.seal-row{
    margin: 24px 0 0 148px;
    display: flex;
    align-items: flex-start;
}
.seal{
    margin-top: 24px;
    flex: none;
}
.seal-a{
    font: bold 29px "Liberation Sans",sans-serif;
    fill: #222;
}
.seal-b{
    font: 21px "Liberation Sans",sans-serif;
    fill: #55c47c;
}
.code{
    margin: 0 0 0 52px;
    font-family: "DejaVu Sans Mono",monospace;
    font-size: 24px;
    line-height: 26.500px;
}
.box-review{
    width: 2053px;
    height: 370px;
    margin: 71px 0 0 66px;
    padding: 0 12px;
}
.box-review legend{
    padding: 0 5px;
    font-size: 26px;
}
.review-top{
    display: flex;
    align-items: flex-start;
    height: 80px;
}
.review-head{
    width: 1105px;
    flex: none;
    margin: 26px 0 0;
    color: #8f1c10;
    font-size: 26px;
    line-height: 36px;
}
.export{
    margin-top: 9px;
    display: flex;
    align-items: center;
    gap: 9px;
    font-size: 18.200px;
}
.sel{
    height: 28px;
    padding: 0 5px 0 8px;
    display: flex;
    align-items: center;
    justify-content: space-between;
    background: #fff;
    border: 2px solid #767676;
    border-radius: 4px;
    font-family: "Liberation Sans",sans-serif;
    font-size: 19px;
}
.sel-fmt{width: 93px;}
.sel-rep{width: 175px;}
.getfile{
    width: 77px;
    height: 29px;
    margin-left: 2px;
    padding: 0;
    background: #efefef;
    border: 2px solid #bbb;
    border-radius: 4px;
    color: #777;
    font-family: "Liberation Sans",sans-serif;
    font-size: 19px;
    font-weight: bold;
}
.box-review .ptab{
    font-size: 26.200px;
}
.congrats{
    margin: 30px 0 0 36px;
    display: flex;
    align-items: center;
    gap: 12px;
    color: #2f7d1f;
    font-size: 35.700px;
    font-weight: bold;
}

/* dock */
.dock{
    width: 2790px;
    height: 110px;
    margin: 18px 0 0 75px;
    padding: 14px 0 0 14px;
    display: flex;
    gap: 22px;
    border: 2px solid rgba(200,200,230,.22);
    border-radius: 34px;
    background: linear-gradient(90deg,#15132a 0,#14122c 30%,#262088 48%,#28208e 100%);
}
.app{
    width: 71px;
    display: flex;
    flex-direction: column;
    align-items: center;
    gap: 11px;
    position: relative;
    flex: none;
}
.app::after{
    content: "";
    width: 8px;
    height: 8px;
    border-radius: 50%;
}
.app.dotted::after{
    background: #8a8a92;
}
.app.lit::after{
    background: #9a94f0;
}
.ic{
    width: 71px;
    height: 71px;
    display: block;
}
.badge{
    position: absolute;
    top: -8px;
    height: 33px;
    min-width: 33px;
    padding: 0 4px;
    border-radius: 17px;
    background: #e2503f;
    color: #fff;
    font-size: 21px;
    font-style: normal;
    line-height: 33px;
    text-align: center;
}
.b22{left: 47px;}
.b1877{left: 29px; width: 50px; letter-spacing: -1px; padding: 0;}
.b2{left: 49px;}
.dock-sep{
    width: 2px;
    height: 73px;
    margin: -2px 6px 0 9px;
    background: #6a66b8;
    flex: none;
}
.cal-mon{
    font: bold 15px "Liberation Sans",sans-serif;
    fill: #fff;
    text-anchor: middle;
}
.cal-day{
    font: 40px "Liberation Sans",sans-serif;
    fill: #222;
    text-anchor: middle;
}
.tv{
    font: 32px "Liberation Sans",sans-serif;
    fill: #fff;
}
.stack{
    display: flex;
    align-items: flex-start;
    margin: -6px 0 0 4px;
    gap: 13px;
}
.doc{
    margin-right: 2px;
}
.folder{
    width: 84px;
    height: 39px;
    margin-top: 22px;
    background: #1c1c22;
    position: relative;
}
.folder i{
    position: absolute;
    left: 14px;
    top: 10px;
    width: 44px;
    height: 10px;
    background: linear-gradient(90deg,#fff 20%,transparent 20% 40%,#4fb4f0 40% 60%,transparent 60% 80%,#4fb4f0 80%);
}
.folder svg{
    position: absolute;
    right: 3px;
    bottom: -20px;
}
.doc-t{
    font: bold 9px "Liberation Sans",sans-serif;
    fill: #2a3f9a;
    text-anchor: middle;
}
.doc-s{
    font: bold 5px "Liberation Sans",sans-serif;
    fill: #222;
}
```
